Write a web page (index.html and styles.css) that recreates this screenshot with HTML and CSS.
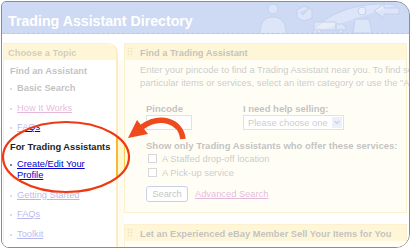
FILE: index.html
```html
<!DOCTYPE html>
<html lang="en">
<head>
    <meta charset="UTF-8">
    <meta name="viewport" content="width=device-width, initial-scale=1.0">
    <title>Trading Assistant Directory</title>
    <link rel="stylesheet" href="styles.css">
</head>
<body>

<div class="frame">
    <div class="masthead">
        <h1>Trading Assistant Directory</h1>
        <svg class="masthead-art" width="153" height="31" viewBox="0 0 153 31">
            <circle cx="17" cy="7" r="5"/>
            <path d="M4 31 C4 19 10 15 17 15 C24 15 30 19 30 31"/>
            <path d="M41 8 L48 4 L56 8 L56 16 L48 19 L41 16 Z M44 10 L47 13 L53 6"/>
            <path d="M56 31 C68 12 104 -2 140 3"/>
            <rect x="58" y="20" width="22" height="8"/>
            <path d="M80 22 L87 22 L90 26 L90 28 L80 28 Z"/>
            <circle cx="63" cy="29" r="2"/>
            <circle cx="85" cy="29" r="2"/>
            <circle cx="106" cy="9" r="4"/>
            <path d="M97 31 L99 17 L113 17 L116 31 Z"/>
            <path d="M118 9 L128 2 L128 6 L143 6 L143 12 L128 12 L128 16 Z"/>
        </svg>
    </div>

    <div class="layout">
        <div class="sidebar">
            <div class="sidebar-head">Choose a Topic</div>
            <div class="nav">
                <div class="nav-group">
                    <div class="nav-title">Find an Assistant</div>
                    <div class="nav-item nav-current">Basic Search</div>
                    <div class="nav-item"><a class="visited" href="#">How It Works</a></div>
                    <div class="nav-item"><a href="#">FAQs</a></div>
                </div>
                <div class="nav-group">
                    <div class="nav-title">For Trading Assistants</div>
                    <div class="nav-item"><a href="#">Create/Edit Your Profile</a></div>
                    <div class="nav-item"><a href="#">Getting Started</a></div>
                    <div class="nav-item"><a href="#">FAQs</a></div>
                    <div class="nav-item"><a href="#">Toolkit</a></div>
                </div>
            </div>
        </div>

        <div class="gutter"></div>

        <div class="main">
            <div class="box">
                <div class="box-head"><span class="grip"></span>Find a Trading Assistant</div>
                <div class="box-body">
                    <p class="intro">Enter your pincode to find a Trading Assistant near you. To find someone who sells<br>particular items or services, select an item category or use the "Advanced Search".</p>
                    <div class="fields">
                        <div class="field field-pin">
                            <div class="field-label">Pincode</div>
                            <input class="text-input" type="text">
                        </div>
                        <div class="field">
                            <div class="field-label">I need help selling:</div>
                            <div class="select">
                                <span class="select-text">Please choose one</span>
                                <span class="select-btn">
                                    <svg width="10" height="11" viewBox="0 0 10 11"><path d="M2.5 4 L5 6.5 L7.5 4" fill="none" stroke="#4d6185" stroke-width="1.5"/></svg>
                                </span>
                            </div>
                        </div>
                    </div>
                    <div class="field-label services">Show only Trading Assistants who offer these services:</div>
                    <label class="check"><input type="checkbox">A Staffed drop-off location</label>
                    <label class="check"><input type="checkbox">A Pick-up service</label>
                    <div class="actions">
                        <button class="search-btn">Search</button>
                        <a class="visited" href="#">Advanced Search</a>
                    </div>
                </div>
            </div>

            <div class="box box-next">
                <div class="box-head"><span class="grip"></span>Let an Experienced eBay Member Sell Your Items for You</div>
                <div class="box-body"></div>
            </div>
        </div>
    </div>

    <div class="spotlight"></div>

    <svg class="callout" width="407" height="245" viewBox="0 0 407 245">
        <ellipse cx="64" cy="155" rx="63" ry="35" fill="none" stroke="#ee3a14" stroke-width="2.2"/>
        <path d="M181 137 C179 119 158 112 140 125" fill="none" stroke="#ef4a1c" stroke-width="5.5"/>
        <polygon points="126,136 135,118 146,132" fill="#ef4a1c"/>
    </svg>
</div>

</body>
</html>
```

FILE: styles.css
```css
body {
    margin: 0;
    font-family: "Liberation Sans", Arial, sans-serif;
    background: #fff;
}
.frame {
    position: relative;
    width: 407px;
    height: 245px;
    margin: 1px 0 0 1px;
    border: 1px solid #8c8c8c;
    border-radius: 5px 14px 14px 8px;
    overflow: hidden;
    background: #fff;
}

/* blue title bar */
.masthead {
    display: flex;
    height: 31px;
    background: #4f7ad8;
    border-bottom: 1px dashed #2a2a48;
}
.masthead h1 {
    margin: 0;
    padding: 10px 0 0 6px;
    font-size: 14.2px;
    line-height: 18px;
    color: #fff;
    white-space: nowrap;
}
.masthead-art {
    margin-left: auto;
    fill: rgba(255, 255, 255, 0.3);
    stroke: #2a55c0;
    stroke-width: 1;
}

.layout {
    display: flex;
    height: 210px;
    margin-top: 9px;
    padding: 0 2px 0 1px;
}

/* left navigation */
.sidebar {
    width: 112px;
    flex-shrink: 0;
    border-top: 1px solid #f5cc50;
    border-left: 1px solid #f5cc50;
    border-right: 2px solid #f8b830;
    border-top-right-radius: 10px;
    background: #fff;
}
.sidebar-head {
    padding: 4px 0 1px 4px;
    font-size: 9.3px;
    line-height: 11px;
    font-weight: bold;
    color: #5c4c1c;
    background: #ffe070;
    border-top-right-radius: 9px;
}
.nav {
    padding: 6px 4px 0 6px;
    font-size: 9.3px;
    line-height: 11px;
}
.nav-group + .nav-group {
    margin-top: 9px;
}
.nav-title {
    font-weight: bold;
    color: #222;
}
.nav-item {
    display: flex;
    margin-top: 8.5px;
}
.nav-title + .nav-item {
    margin-top: 6px;
}
.nav-item::before {
    content: "";
    flex-shrink: 0;
    width: 2px;
    height: 2px;
    margin: 5px 5px 0 0;
    background: #888;
}
.nav-current {
    font-weight: bold;
    color: #222;
}
a {
    color: #0000cc;
}
a.visited {
    color: #a00080;
}

.gutter {
    width: 6px;
    flex-shrink: 0;
    margin-top: 17px;
    background: #fff6d2;
}

/* content boxes */
.main {
    flex: 1;
    min-width: 0;
}
.box {
    border: 1px solid #f5cc50;
    background: #fffbdc;
}
.box-next {
    margin-top: 11px;
    height: 40px;
}
.box-head {
    display: flex;
    height: 13px;
    padding: 3px 0 0 2px;
    font-size: 9.3px;
    line-height: 13px;
    font-weight: bold;
    color: #222;
    background: #ffe070;
    white-space: nowrap;
}
.grip {
    width: 6px;
    height: 10px;
    margin: 0 7px 0 0;
    background: radial-gradient(circle, #c89a30 0.8px, transparent 1.1px) 0 0 / 3px 3px;
}
.box-body {
    padding: 3px 0 9.7px 15px;
    font-size: 9.4px;
    color: #444;
}
.intro {
    margin: 0;
    line-height: 13px;
    white-space: nowrap;
}
.fields {
    display: flex;
    margin-top: 12.5px;
    padding-left: 6px;
}
.field-pin {
    width: 97px;
}
.field-label {
    font-size: 9.5px;
    line-height: 13px;
    font-weight: bold;
    color: #222;
    white-space: nowrap;
}
.text-input {
    display: block;
    box-sizing: border-box;
    width: 46px;
    height: 15px;
    margin: 0;
    border: 1px solid #7f9db9;
    background: #fff;
}
.select {
    display: flex;
    align-items: center;
    box-sizing: border-box;
    width: 101px;
    height: 15px;
    border: 1px solid #7f9db9;
    background: #fff;
}
.select-text {
    flex: 1;
    padding-left: 4px;
    line-height: 13px;
    color: #444;
}
.select-btn {
    display: flex;
    width: 10px;
    height: 11px;
    margin-right: 1px;
    background: #b9c9f0;
}
.services {
    margin-top: 9px;
    padding-left: 6px;
}
.check {
    display: flex;
    align-items: center;
    height: 14px;
    padding-left: 8px;
    color: #444;
}
.check input {
    appearance: none;
    width: 9px;
    height: 9px;
    margin: 0 5px 0 0;
    border: 1px solid #707084;
    background: #fff;
}
.actions {
    display: flex;
    align-items: center;
    margin-top: 6.4px;
    padding-left: 6px;
}
.search-btn {
    width: 42px;
    height: 16px;
    padding: 0;
    font-family: inherit;
    font-size: 9.3px;
    color: #222;
    border: 1px solid #3c5aa8;
    border-radius: 3px;
    background: #fff;
}
.actions a {
    margin-left: 7px;
    font-size: 9.3px;
}

/* everything outside the ring is washed out */
.spotlight {
    position: absolute;
    inset: 0;
    pointer-events: none;
    background: radial-gradient(ellipse 63px 35px at 64px 155px, transparent 98%, rgba(255, 255, 255, 0.72) 100%);
}
.callout {
    position: absolute;
    top: 0;
    left: 0;
    pointer-events: none;
}
```
